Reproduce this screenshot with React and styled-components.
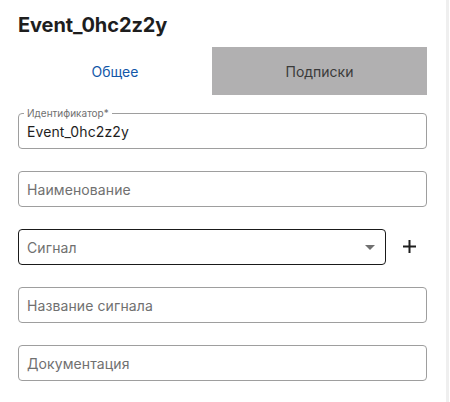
import React from "react";
import styled, { createGlobalStyle } from "styled-components";

const GlobalStyle = createGlobalStyle`
  html, body {
    margin: 0;
    padding: 0;
    background: #fff;
  }
  body {
    font-family: Inter, "Noto Sans", sans-serif;
  }
`;

const Panel = styled.div`
  width: 449px;
  height: 402px;
  box-sizing: border-box;
  border-right: 3px solid #efefef;
  padding: 13px 19px 0 18px;
  background: #fff;
`;

const Title = styled.h2`
  margin: 0;
  font-size: 20px;
  line-height: 24px;
  font-weight: 700;
  color: #1e1e1e;
  letter-spacing: -0.1px;
`;

const Tabs = styled.div`
  display: flex;
  margin-top: 10px;
  height: 48px;
`;

const Tab = styled.button`
  flex: ${(p) => p.$grow};
  border: none;
  margin: 0;
  padding: 0;
  font-family: inherit;
  font-size: 14px;
  background: ${(p) => (p.$active ? "#fff" : "#b1b0b1")};
  color: ${(p) => (p.$active ? "#1257a8" : "#3a3a3a")};
  cursor: pointer;
`;

const Form = styled.div`
  display: flex;
  flex-direction: column;
  gap: 22px;
  margin-top: 18px;
`;

const Row = styled.div`
  display: flex;
  align-items: center;
`;

const Field = styled.div`
  position: relative;
  flex: 1 0 auto;
  height: 36px;
  box-sizing: border-box;
  border: 1px solid ${(p) => (p.$focused ? "#1a1a1a" : "#9e9e9e")};
  border-radius: 4px;
  display: flex;
  align-items: center;
  padding: 0 8px;
  font-size: 14px;
  letter-spacing: 0.1px;
  color: ${(p) => (p.$filled ? "#1e1e1e" : "#707070")};
`;

const Legend = styled.span`
  position: absolute;
  top: -7px;
  left: 5px;
  padding: 0 3px;
  background: #fff;
  font-size: 10px;
  line-height: 12px;
  letter-spacing: 0;
  color: #707070;
`;

const Arrow = styled.span`
  margin-left: auto;
  width: 0;
  height: 0;
  border-left: 5px solid transparent;
  border-right: 5px solid transparent;
  border-top: 5px solid #707070;
  margin-right: 2px;
`;

const AddButton = styled.button`
  width: 41px;
  height: 36px;
  border: none;
  background: none;
  padding: 0 0 2px 17px;
  display: flex;
  align-items: center;
  justify-content: flex-start;
  cursor: pointer;
`;

const App = () => {
  return (
    <>
      <GlobalStyle />
      <Panel>
        <Title>Event_0hc2z2y</Title>
        <Tabs>
          <Tab $active $grow={194}>Общее</Tab>
          <Tab $grow={215}>Подписки</Tab>
        </Tabs>
        <Form>
          <Field $filled>
            <Legend>Идентификатор*</Legend>
            Event_0hc2z2y
          </Field>
          <Field>Наименование</Field>
          <Row>
            <Field $focused>
              Сигнал
              <Arrow />
            </Field>
            <AddButton>
              <svg width="13" height="13" viewBox="0 0 13 13">
                <path d="M6.5 0v13M0 6.5h13" stroke="#1e1e1e" strokeWidth="2" />
              </svg>
            </AddButton>
          </Row>
          <Field>Название сигнала</Field>
          <Field>Документация</Field>
        </Form>
      </Panel>
    </>
  );
};

export default App;
